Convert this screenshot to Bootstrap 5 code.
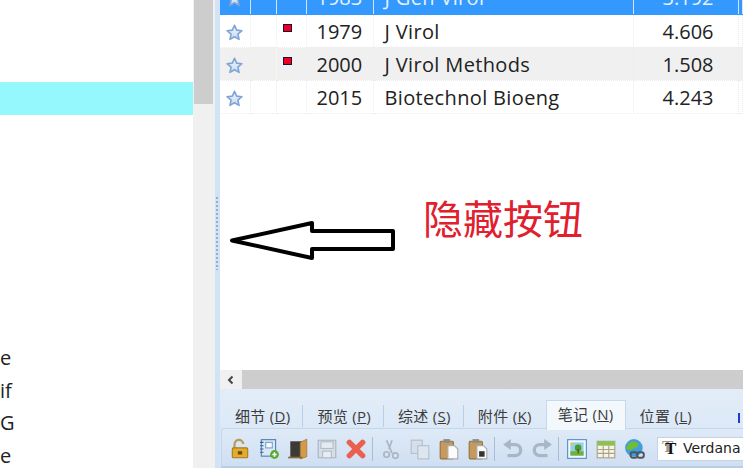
<!DOCTYPE html>
<html lang="zh">
<head>
<meta charset="UTF-8">
<title>隐藏按钮</title>
<link href="https://cdn.jsdelivr.net/npm/bootstrap@5.3.0/dist/css/bootstrap.min.css" rel="stylesheet">
<style>
html, body { height: 468px; overflow: hidden; background: #fff; }
body { font-family: "Open Sans", "Noto Sans CJK SC", sans-serif; color: #222; }
.app-frame { width: 743px; height: 468px; position: relative; }

/* left list */
.side-list { width: 193px; font-size: 20px; line-height: 32.5px; padding-top: 82px; }
.side-row { height: 32.5px; white-space: nowrap; }
.side-sel { background: #95f8fd; }
.side-gap { height: 195px; }

/* vertical scrollbar + splitter */
.vscroll { width: 22px; background: #f0f0f0; }
.vscroll-thumb { width: 19px; height: 104px; background: #cdcdcd; margin-left: 1px; }
.splitter { width: 5px; background: #d3e3f6; padding-top: 197px; }
.splitter-dots { height: 73px; width: 2px; margin-left: 1px; background: repeating-linear-gradient(#94aed2 0 2px, transparent 2px 4px); }

/* right side */
.ref-pane { width: 523px; }
.ref-list { height: 370px; }
.ref-table { table-layout: fixed; width: 523px; margin-top: -19px; border-collapse: collapse; font-size: 20px; }
.ref-table td { height: 33px; padding: 2px 0 0 10px; border-right: 1px dotted #ececec; border-bottom: 1px dotted #ececec; line-height: 1; white-space: nowrap; color: #222; vertical-align: middle; }
.ref-table td.ico-cell { padding: 0; text-align: center; position: relative; }
.ref-table td.name-cell { padding-left: 11px; letter-spacing: .35px; }
.ref-table td.num-cell { padding-left: 29px; }
.ref-table tr.row-active td { background: #3399ff; color: #e6f2ff; border-right: 1px solid #cfe5fb; border-bottom: 1px solid #3399ff; }
.ref-table tr.row-alt td { background: #f0f0f0; }
.read-mark { position: absolute; left: 6px; top: 9px; width: 9px; height: 8px; background: #e8001e; border: 1px solid #2a0a3a; }

.hscroll { height: 19px; background: #cdcdcd; }
.hscroll-btn { width: 22px; background: #f0f0f0; color: #444; }
.bottom-band { height: 79px; background: linear-gradient(#e3edf8, #d5e4f5); overflow: hidden; }
.tab-strip { height: 28px; margin-top: 11px; padding-left: 1px; font-size: 15px; letter-spacing: .3px; color: #3c3c3c; position: relative; }
.tab-item { flex: none; padding: 0 12px 0 14px; height: 22px; margin-top: 5px; line-height: 22px; border-right: 1px solid #b9cfe8; white-space: nowrap; }
.tab-item.tab-plain { border-right: 0; }
.tab-item.tab-before { margin-right: 2px; }
.tab-item.tab-on { height: 30px; margin-top: 0; line-height: 26px; width: 80px; padding: 0; text-align: center; background: #f3f8fd; border: 1px solid #c5d8ee; border-bottom: 0; position: relative; z-index: 1; }
.tab-flag { flex: none; width: 2px; height: 10px; background: #1a3fd0; margin: 13px 0 0 34px; }
.tool-strip { height: 40px; margin-left: 1px; border: 1px solid #c3d6ec; border-right: 0; border-bottom: 2px solid #bacde3; border-radius: 3px 0 0 0; background: linear-gradient(#dfeaf7, #cfdff2); padding: 2px 0 0 3px; }
.tool-btn { flex: none; width: 29px; height: 100%; }
.tool-sep { flex: none; width: 1px; height: 24px; margin: 0 3px 0 2px; background: #a9bdd6; }
.font-combo { flex: none; width: 90px; height: 24px; margin-left: 8px; background: #fff; border: 1px solid #c4d3e6; font-family: "DejaVu Sans", sans-serif; font-size: 14px; color: #222; white-space: nowrap; overflow: hidden; }
.font-glyph { width: 25px; padding-left: 7px; line-height: 1; font-family: "Liberation Serif", serif; font-size: 17px; font-weight: 700; color: #111; text-shadow: -3px -2px 0 #999; }

/* annotation on top of the window */
.note-arrow { position: absolute; left: 225px; top: 216px; }
.note-text { position: absolute; left: 423px; top: 188px; font-family: "Noto Sans CJK SC", sans-serif; font-size: 40px; line-height: 58px; color: #e0202c; white-space: nowrap; }
</style>
</head>
<body>
<svg width="0" height="0" class="position-absolute">
  <defs>
    <linearGradient id="starFill" x1="0" y1="0" x2="0" y2="1"><stop offset="0" stop-color="#f4f8fd"/><stop offset="1" stop-color="#c4d8f0"/></linearGradient>
    <symbol id="star" viewBox="0 0 16 16"><path d="M8 1.2l2 4.6 5 .5-3.8 3.3 1.1 4.9L8 12l-4.3 2.5 1.1-4.9L1 6.3l5-.5z" fill="url(#starFill)" stroke="#7ea4d6" stroke-width="1.5" stroke-linejoin="round"/></symbol>
  </defs>
</svg>

<div class="app-frame d-flex">
  <div class="side-list overflow-hidden">
    <div class="side-row side-sel"></div>
    <div class="side-row"></div>
    <div class="side-gap"></div>
    <div class="side-row">e</div>
    <div class="side-row">if</div>
    <div class="side-row">G</div>
    <div class="side-row">e</div>
  </div>
  <div class="vscroll"><div class="vscroll-thumb"></div></div>
  <div class="splitter"><div class="splitter-dots"></div></div>

  <div class="ref-pane d-flex flex-column">
    <div class="ref-list overflow-hidden">
      <table class="ref-table">
        <colgroup><col style="width:30px"><col style="width:26px"><col style="width:30px"><col style="width:67px"><col style="width:260px"><col style="width:105px"><col></colgroup>
        <tr class="row-active"><td class="ico-cell"><svg width="17" height="17"><use href="#star"/></svg></td><td></td><td></td><td>1983</td><td class="name-cell">J Gen Virol</td><td class="num-cell">3.192</td><td></td></tr>
        <tr><td class="ico-cell"><svg width="17" height="17"><use href="#star"/></svg></td><td></td><td class="ico-cell"><span class="read-mark"></span></td><td>1979</td><td class="name-cell">J Virol</td><td class="num-cell">4.606</td><td></td></tr>
        <tr class="row-alt"><td class="ico-cell"><svg width="17" height="17"><use href="#star"/></svg></td><td></td><td class="ico-cell"><span class="read-mark"></span></td><td>2000</td><td class="name-cell">J Virol Methods</td><td class="num-cell">1.508</td><td></td></tr>
        <tr><td class="ico-cell"><svg width="17" height="17"><use href="#star"/></svg></td><td></td><td></td><td>2015</td><td class="name-cell">Biotechnol Bioeng</td><td class="num-cell">4.243</td><td></td></tr>
      </table>
    </div>

    <div class="hscroll">
      <div class="hscroll-btn h-100 d-flex align-items-center justify-content-center">
        <svg width="10" height="10" viewBox="0 0 10 10"><path d="M6.5 1.5L3 5l3.5 3.5" fill="none" stroke="#444" stroke-width="2"/></svg>
      </div>
    </div>

    <div class="bottom-band">
      <div class="tab-strip d-flex">
        <div class="tab-item">细节 (<u>D</u>)</div>
        <div class="tab-item">预览 (<u>P</u>)</div>
        <div class="tab-item">综述 (<u>S</u>)</div>
        <div class="tab-item tab-plain tab-before">附件 (<u>K</u>)</div>
        <div class="tab-item tab-on">笔记 (<u>N</u>)</div>
        <div class="tab-item tab-plain">位置 (<u>L</u>)</div>
        <div class="tab-flag"></div>
      </div>
      <div class="tool-strip d-flex align-items-center">
        <!-- lock -->
        <div class="tool-btn d-flex align-items-center justify-content-center"><svg width="22" height="22" viewBox="0 0 20 20"><path d="M5 9V6a4 4 0 0 1 8-.5" fill="none" stroke="#b89a5a" stroke-width="2"/><rect x="3" y="9" width="14" height="9" rx="1" fill="#e5ab2e" stroke="#a87a18"/><rect x="8" y="12" width="4" height="3" fill="#6a4a10"/></svg></div>
        <!-- notebook -->
        <div class="tool-btn d-flex align-items-center justify-content-center"><svg width="22" height="22" viewBox="0 0 20 20"><rect x="3" y="1.500" width="13" height="15" fill="#d8e8f6" stroke="#4d80b4"/><path d="M2 4h3M2 7h3M2 10h3M2 13h3" stroke="#335a85"/><rect x="7" y="4" width="6" height="5" fill="#f7fbff" stroke="#7ea0c4"/><circle cx="15" cy="15" r="4" fill="#58ab2d"/><path d="M15 13v4M13 15h4" stroke="#fff" stroke-width="1.400"/></svg></div>
        <!-- door -->
        <div class="tool-btn d-flex align-items-center justify-content-center"><svg width="22" height="22" viewBox="0 0 20 20"><rect x="3" y="3" width="11" height="15" fill="#3c3a36"/><path d="M12 4l6-3v16l-6 2z" fill="#d49a4c" stroke="#a06c28" stroke-width=".6"/><rect x="1" y="17" width="13" height="1.500" fill="#8a6a3c"/></svg></div>
        <!-- save (disabled) -->
        <div class="tool-btn d-flex align-items-center justify-content-center"><svg width="22" height="22" viewBox="0 0 20 20"><path d="M2 2h16v16H2z" fill="#d5dde6" stroke="#a9b4c0"/><rect x="4.500" y="3.500" width="11" height="6" fill="#e6ebf1" stroke="#b2bcc7"/><rect x="6" y="12" width="8" height="6" fill="#e8edf2" stroke="#b2bcc7"/></svg></div>
        <!-- delete -->
        <div class="tool-btn d-flex align-items-center justify-content-center"><svg width="22" height="22" viewBox="0 0 20 20"><path d="M4 4l12 12M16 4L4 16" stroke="#e9604f" stroke-width="5" stroke-linecap="round"/></svg></div>
        <div class="tool-sep"></div>
        <!-- cut -->
        <div class="tool-btn d-flex align-items-center justify-content-center"><svg width="22" height="22" viewBox="0 0 20 20"><path d="M6 2l5 12M11 2L8 10" fill="none" stroke="#aab5c2" stroke-width="1.500"/><circle cx="6" cy="15" r="2.500" fill="none" stroke="#aab5c2" stroke-width="1.500"/><circle cx="14" cy="16" r="2.500" fill="none" stroke="#aab5c2" stroke-width="1.500"/></svg></div>
        <!-- copy -->
        <div class="tool-btn d-flex align-items-center justify-content-center"><svg width="22" height="22" viewBox="0 0 20 20"><rect x="2" y="2" width="10" height="12" fill="#d5dee9" stroke="#b3bfcd"/><rect x="8" y="7" width="10" height="12" fill="#dde5ee" stroke="#b3bfcd"/></svg></div>
        <!-- paste -->
        <div class="tool-btn d-flex align-items-center justify-content-center"><svg width="22" height="22" viewBox="0 0 20 20"><rect x="2" y="3" width="12" height="16" rx="1" fill="#c69a5e" stroke="#94703c"/><rect x="5" y="1" width="6" height="3.500" fill="#8d8d85"/><path d="M9 7h6l3 3v9H9z" fill="#fbfbfb" stroke="#aaa"/></svg></div>
        <!-- paste special -->
        <div class="tool-btn d-flex align-items-center justify-content-center"><svg width="22" height="22" viewBox="0 0 20 20"><rect x="2" y="3" width="12" height="16" rx="1" fill="#c69a5e" stroke="#94703c"/><rect x="5" y="1" width="6" height="3.500" fill="#8d8d85"/><path d="M9 7h6l3 3v9H9z" fill="#fbfbfb" stroke="#aaa"/><rect x="11" y="12" width="5" height="5" fill="#333"/></svg></div>
        <div class="tool-sep"></div>
        <!-- undo -->
        <div class="tool-btn d-flex align-items-center justify-content-center"><svg width="22" height="22" viewBox="0 0 20 20"><path d="M4 6h8a4.500 4.500 0 0 1 0 10H5" fill="none" stroke="#a9b6c6" stroke-width="3"/><path d="M8 1v10L1 6z" fill="#a9b6c6"/></svg></div>
        <!-- redo -->
        <div class="tool-btn d-flex align-items-center justify-content-center"><svg width="22" height="22" viewBox="0 0 20 20"><path d="M16 6H8a4.500 4.500 0 0 0 0 10h7" fill="none" stroke="#a9b6c6" stroke-width="3"/><path d="M12 1v10l7-5z" fill="#a9b6c6"/></svg></div>
        <div class="tool-sep"></div>
        <!-- image -->
        <div class="tool-btn d-flex align-items-center justify-content-center"><svg width="22" height="22" viewBox="0 0 20 20"><rect x="1.500" y="1.500" width="17" height="17" fill="#f5f9fd" stroke="#4f8ec6"/><rect x="4" y="4" width="12" height="12" fill="#8fd0ee"/><rect x="4" y="12" width="12" height="4" fill="#6fb23a"/><circle cx="11" cy="9" r="3" fill="#4d9a2c"/><rect x="10.500" y="10" width="1.200" height="4" fill="#6a4a20"/><circle cx="5.500" cy="5.500" r="1.300" fill="#f4c430"/></svg></div>
        <!-- table -->
        <div class="tool-btn d-flex align-items-center justify-content-center"><svg width="22" height="22" viewBox="0 0 20 20"><rect x="2" y="3" width="16" height="15" fill="#f8f3e4" stroke="#a8a288"/><rect x="2" y="3" width="16" height="4" fill="#8cc152"/><path d="M2 10.500h16M2 14h16M7.500 7v11M12.500 7v11" stroke="#a8a288"/></svg></div>
        <!-- hyperlink -->
        <div class="tool-btn d-flex align-items-center justify-content-center"><svg width="22" height="22" viewBox="0 0 20 20"><circle cx="9" cy="9" r="8" fill="#3f9fd8"/><path d="M4 5c3-3 7-2 9 0 1 3-3 4-5 5-2 2-5 1-6-1z" fill="#72bb3a"/><rect x="6" y="13" width="6" height="5" rx="2" fill="none" stroke="#4e5660" stroke-width="1.800"/><rect x="12" y="13" width="6" height="5" rx="2" fill="none" stroke="#4e5660" stroke-width="1.800"/></svg></div>
        <div class="font-combo d-flex align-items-center">
          <div class="font-glyph">T</div>
          <span>Verdana</span>
        </div>
      </div>
    </div>
  </div>

  <svg class="note-arrow" width="174" height="48" viewBox="225 216 174 48"><path d="M232 240.500L312 223v8h81v18h-81v9z" fill="#fff" stroke="#000" stroke-width="4" stroke-linejoin="round"/></svg>
  <div class="note-text">隐藏按钮</div>
</div>
</body>
</html>
